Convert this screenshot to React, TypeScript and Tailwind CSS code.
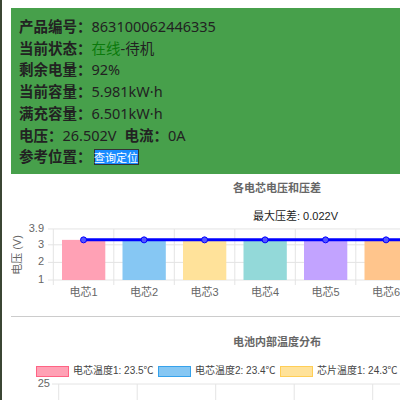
import React from "react";

const CELLS = [
  { name: "电芯1", color: "#ffa1b5", v: 3.28 },
  { name: "电芯2", color: "#86c7f3", v: 3.28 },
  { name: "电芯3", color: "#ffe29a", v: 3.28 },
  { name: "电芯4", color: "#93d9d9", v: 3.28 },
  { name: "电芯5", color: "#c2a3ff", v: 3.28 },
  { name: "电芯6", color: "#ffc58c", v: 3.28 },
  { name: "电芯7", color: "#ffa1b5", v: 3.28 },
  { name: "电芯8", color: "#86c7f3", v: 3.28 },
];

const CHART_FONT = "'Liberation Sans', 'Noto Sans CJK SC', sans-serif";

// chart geometry (px inside the svg)
const X0 = 42.3;
const STEP = 60.5;
const yOf = (v: number) => 106 - (v - 1) * 17.6;

function Row({ label, children }: { label: string; children: React.ReactNode }) {
  return (
    <div className="flex items-center whitespace-nowrap">
      <span className="font-bold">{label}：</span>
      {children}
    </div>
  );
}

function VoltageChart() {
  const ticks = [3.9, 3, 2, 1];
  return (
    <svg width={532} height={142} className="block" style={{ fontFamily: CHART_FONT }}>
      <text x={266} y={15} textAnchor="middle" dominantBaseline="middle" fontSize={11} fontWeight="bold" fill="#666">
        各电芯电压和压差
      </text>
      <text x={284.5} y={43} textAnchor="middle" dominantBaseline="middle" fontSize={11} fill="#222">
        最大压差: 0.022V
      </text>
      {/* horizontal grid */}
      {ticks.map((t) => (
        <g key={t}>
          <line x1={37} x2={532} y1={yOf(t)} y2={yOf(t)} stroke="#e4e4e4" />
          <text x={33} y={yOf(t)} textAnchor="end" dominantBaseline="middle" fontSize={11} fill="#666">
            {t}
          </text>
        </g>
      ))}
      {/* vertical grid */}
      {Array.from({ length: 9 }).map((_, i) => (
        <line key={i} x1={X0 + i * STEP} x2={X0 + i * STEP} y1={55} y2={111} stroke="#e4e4e4" />
      ))}
      <text
        x={7}
        y={81}
        textAnchor="middle"
        dominantBaseline="middle"
        fontSize={11}
        fill="#666"
        transform="rotate(-90 7 81)"
      >
        电压 (V)
      </text>
      {CELLS.map((c, i) => (
        <g key={c.name}>
          <rect x={X0 + i * STEP + 8.7} y={yOf(c.v)} width={43.3} height={106 - yOf(c.v)} fill={c.color} />
          <text x={X0 + i * STEP + STEP / 2} y={119} textAnchor="middle" dominantBaseline="middle" fontSize={11} fill="#666">
            {c.name}
          </text>
        </g>
      ))}
      <line x1={X0 + STEP / 2} x2={532} y1={yOf(3.28)} y2={yOf(3.28)} stroke="#0000ff" strokeWidth={3} />
      {CELLS.map((c, i) => (
        <circle key={c.name} cx={X0 + i * STEP + STEP / 2} cy={yOf(c.v)} r={3} fill="#5555ff" stroke="#0000ff" strokeWidth={1} />
      ))}
    </svg>
  );
}

function TempChart() {
  const legend = [
    { x: 25, label: "电芯温度1: 23.5℃", fill: "#ffa1b5", stroke: "#ff6384" },
    { x: 147, label: "电芯温度2: 23.4℃", fill: "#86c7f3", stroke: "#36a2eb" },
    { x: 269, label: "芯片温度1: 24.3℃", fill: "#ffe29a", stroke: "#ffce56" },
  ];
  return (
    <svg width={532} height={83} className="block" style={{ fontFamily: CHART_FONT }}>
      <text x={266} y={26} textAnchor="middle" dominantBaseline="middle" fontSize={11} fontWeight="bold" fill="#666">
        电池内部温度分布
      </text>
      {legend.map((l) => (
        <g key={l.label}>
          <rect x={l.x + 0.5} y={49.5} width={32} height={10} fill={l.fill} stroke={l.stroke} />
          <text x={l.x + 37} y={54.5} dominantBaseline="middle" fontSize={10} fill="#444">
            {l.label}
          </text>
        </g>
      ))}
      <line x1={41} x2={532} y1={67} y2={67} stroke="#e4e4e4" />
      <text x={39} y={67} textAnchor="end" dominantBaseline="middle" fontSize={11} fill="#666">
        25
      </text>
      {Array.from({ length: 7 }).map((_, i) => (
        <line key={i} x1={47.7 + i * 78.5} x2={47.7 + i * 78.5} y1={67} y2={83} stroke="#e4e4e4" />
      ))}
    </svg>
  );
}

export default function App() {
  return (
    <div className="flex h-[400px] w-[400px] overflow-hidden bg-white">
      <div className="w-[2px] shrink-0 bg-[#3b4634]" />
      <div className="flex min-w-0 flex-1 flex-col pl-[9px] pt-2">
        {/* status panel */}
        <div
          className="flex h-[166px] shrink-0 flex-col bg-[#47a04b] pl-2 pt-2 text-[14.5px] leading-[21.7px] text-[#222]"
          style={{ fontFamily: "'Noto Sans', 'Noto Sans CJK SC', sans-serif" }}
        >
          <Row label="产品编号">
            <span>863100062446335</span>
          </Row>
          <Row label="当前状态">
            <span className="text-[#0b7a0b]">在线</span>
            <span>-待机</span>
          </Row>
          <Row label="剩余电量">
            <span>92%</span>
          </Row>
          <Row label="当前容量">
            <span>5.981kW·h</span>
          </Row>
          <Row label="满充容量">
            <span>6.501kW·h</span>
          </Row>
          <Row label="电压">
            <span>26.502V</span>
            <span className="ml-2 font-bold">电流：</span>
            <span>0A</span>
          </Row>
          <Row label="参考位置">
            <button className="ml-[2px] flex h-[16px] w-[45px] items-center justify-center border border-[#333] bg-[#1a8cff] text-[11px] leading-none text-white">
              查询定位
            </button>
          </Row>
        </div>

        {/* voltage chart */}
        <div className="h-[142px] shrink-0">
          <VoltageChart />
        </div>

        {/* temperature chart */}
        <div className="shrink-0 border-t border-[#cccccc]">
          <TempChart />
        </div>
      </div>
    </div>
  );
}
